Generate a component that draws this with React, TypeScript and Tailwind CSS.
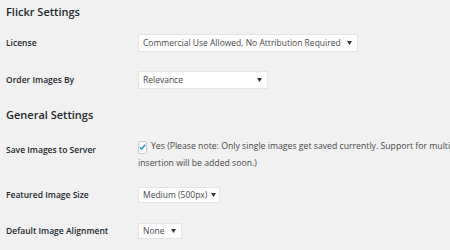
import React from "react";

const font = { fontFamily: '"Open Sans", "Noto Sans", sans-serif' };

function Arrow() {
  return (
    <svg width="5" height="4" viewBox="0 0 5 4" className="shrink-0">
      <path d="M0 0 L5 0 L2.5 4 Z" fill="#333" />
    </svg>
  );
}

function Select({ text, width }: { text: string; width: string }) {
  return (
    <div
      className={`flex items-center justify-between gap-[4px] h-full bg-white border border-[#e4e4e4] pl-[4px] pr-[5px] text-[8.5px] text-[#484848] ${width}`}
    >
      <span className="whitespace-nowrap">{text}</span>
      <Arrow />
    </div>
  );
}

function Label({ children }: { children: React.ReactNode }) {
  return (
    <div className="w-[132px] shrink-0 text-[8.5px] font-semibold text-[#23282d] whitespace-nowrap">
      {children}
    </div>
  );
}

export default function App() {
  return (
    <div
      className="w-[450px] h-[250px] bg-[#f1f1f1] overflow-hidden pl-[6px]"
      style={font}
    >
      <div className="h-[24px] flex items-center text-[11px] font-semibold text-[#23282d]">
        Flickr Settings
      </div>
      <div className="mt-[10px] h-[18px] flex items-center">
        <Label>License</Label>
        <Select text="Commercial Use Allowed, No Attribution Required" width="w-[220px]" />
      </div>
      <div className="mt-[19px] h-[18px] flex items-center">
        <Label>Order Images By</Label>
        <Select text="Relevance" width="w-[130px]" />
      </div>
      <div className="mt-[16px] h-[20px] flex items-center text-[11px] font-semibold text-[#23282d]">
        General Settings
      </div>
      <div className="mt-[13px] flex items-start">
        <div className="pt-[6px]">
          <Label>Save Images to Server</Label>
        </div>
        <div className="text-[8.7px] leading-[17px] text-[#484848] whitespace-nowrap">
          <div className="flex items-center">
            <span className="inline-flex w-[9px] h-[13px] mt-[2px] bg-white border border-[#ccc] rounded-[2px] items-start justify-center mr-[4px]">
              <svg width="7" height="6" viewBox="0 0 7 6" className="mt-[2px]">
                <path d="M0.8 3.2 L2.6 5 L6.2 0.8" stroke="#1e8cbe" strokeWidth="1.4" fill="none" />
              </svg>
            </span>
            <span>
              Yes (Please note: Only single images get saved currently. Support for multiple image
            </span>
          </div>
          <div>insertion will be added soon.)</div>
        </div>
      </div>
      <div className="mt-[15px] h-[16px] flex items-center">
        <Label>Featured Image Size</Label>
        <Select text="Medium (500px)" width="w-[82px]" />
      </div>
      <div className="mt-[20px] h-[16px] flex items-center">
        <Label>Default Image Alignment</Label>
        <Select text="None" width="w-[44px]" />
      </div>
    </div>
  );
}
